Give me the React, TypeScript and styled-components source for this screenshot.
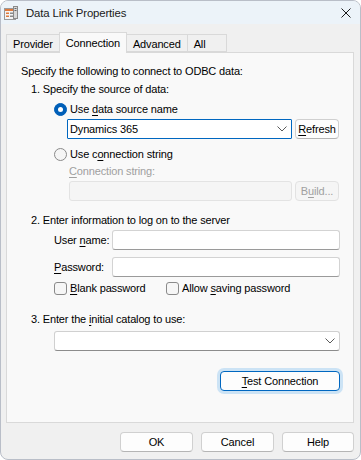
import React from "react";
import styled, { createGlobalStyle } from "styled-components";

const GlobalStyle = createGlobalStyle`
  html, body {
    margin: 0;
    padding: 0;
    background: #ffffff;
  }
  body {
    font-family: "Liberation Sans", Arial, sans-serif;
    font-size: 11px;
    line-height: 16px;
    letter-spacing: -0.15px;
    color: #000;
  }
  * {
    box-sizing: border-box;
  }
`;

const Window = styled.div`
  width: 361px;
  height: 460px;
  border: 1px solid #b9bec8;
  border-radius: 8px;
  background: #f0f0f0;
  overflow: hidden;
  display: flex;
  flex-direction: column;
`;

const TitleBar = styled.div`
  height: 23px;
  background: #ecf3f9;
  display: flex;
  align-items: center;
  padding-left: 2px;
  padding-right: 9px;
`;

const TitleText = styled.span`
  font-size: 11.4px;
  color: #1a1a1a;
  margin-left: 7px;
  flex: 1;
`;

const Body = styled.div`
  flex: 1;
  display: flex;
  flex-direction: column;
  padding: 8px 6px 0 5px;
`;

const TabStrip = styled.div`
  display: flex;
  align-items: flex-end;
  height: 20px;
  padding-left: 1px;
  position: relative;
  z-index: 1;
`;

const Tab = styled.div<{ $active?: boolean }>`
  height: ${(p) => (p.$active ? "21px" : "18px")};
  margin-bottom: ${(p) => (p.$active ? "-1px" : "0")};
  padding: 0 6px;
  min-width: 40px;
  background: ${(p) => (p.$active ? "#f9f9f9" : "#f0f0f0")};
  border: 1px solid #d9d9d9;
  border-bottom: ${(p) => (p.$active ? "none" : "1px solid #d9d9d9")};
  margin-left: -1px;
  display: flex;
  align-items: center;
  padding-top: ${(p) => (p.$active ? "0" : "1px")};
  white-space: nowrap;
`;

const Panel = styled.div`
  height: 371px;
  background: #f9f9f9;
  border: 1px solid #d9d9d9;
  padding: 10px 13px 0 14px;
  display: flex;
  flex-direction: column;
`;

const Line = styled.div<{ $indent?: number; $top?: number; $disabled?: boolean }>`
  height: 16px;
  line-height: 16px;
  margin-left: ${(p) => p.$indent ?? 0}px;
  margin-top: ${(p) => p.$top ?? 0}px;
  color: ${(p) => (p.$disabled ? "#a0a0a0" : "#000")};
  white-space: nowrap;
`;

const Row = styled.div<{ $indent?: number; $top?: number }>`
  display: flex;
  align-items: center;
  min-height: 16px;
  margin-left: ${(p) => p.$indent ?? 0}px;
  margin-top: ${(p) => p.$top ?? 0}px;
  white-space: nowrap;
`;

const Mn = styled.u`
  text-decoration: underline;
  text-underline-offset: 2px;
  text-decoration-thickness: 1px;
`;

const RadioDot = styled.span<{ $checked?: boolean }>`
  width: 13px;
  height: 13px;
  border-radius: 50%;
  flex: none;
  margin-right: 3px;
  display: flex;
  align-items: center;
  justify-content: center;
  background: ${(p) => (p.$checked ? "#005fb8" : "#f5f5f5")};
  border: 1px solid ${(p) => (p.$checked ? "#005fb8" : "#8a8a8a")};
  &::after {
    content: "";
    display: ${(p) => (p.$checked ? "block" : "none")};
    width: 5px;
    height: 5px;
    border-radius: 50%;
    background: #ffffff;
  }
`;

const CheckBox = styled.span`
  width: 13px;
  height: 13px;
  border-radius: 3px;
  flex: none;
  margin-right: 3px;
  background: #f6f6f6;
  border: 1px solid #8a8a8a;
`;

const Combo = styled.div<{ $width: number; $focused?: boolean }>`
  width: ${(p) => p.$width}px;
  height: 20px;
  background: #ffffff;
  border: 1px solid ${(p) => (p.$focused ? "#0067c0" : "#d0d0d0")};
  border-bottom-color: ${(p) => (p.$focused ? "#0067c0" : "#8c8c8c")};
  border-radius: ${(p) => (p.$focused ? "1px" : "3px")};
  display: flex;
  align-items: center;
  padding-left: 2px;
  padding-right: 4px;
`;

const ComboText = styled.span`
  flex: 1;
`;

const TextBox = styled.div<{ $width: number; $disabled?: boolean }>`
  width: ${(p) => p.$width}px;
  height: 20px;
  background: ${(p) => (p.$disabled ? "#f5f5f5" : "#ffffff")};
  border: 1px solid ${(p) => (p.$disabled ? "#e3e3e3" : "#d3d3d3")};
  border-bottom-color: ${(p) => (p.$disabled ? "#e3e3e3" : "#9a9a9a")};
  border-radius: 3px;
`;

const Button = styled.div<{ $width: number; $disabled?: boolean }>`
  width: ${(p) => p.$width}px;
  height: 20px;
  background: ${(p) => (p.$disabled ? "#f5f5f5" : "#fdfdfd")};
  color: ${(p) => (p.$disabled ? "#a0a0a0" : "#000")};
  border: 1px solid ${(p) => (p.$disabled ? "#e2e2e2" : "#d0d0d0")};
  border-bottom-color: ${(p) => (p.$disabled ? "#e2e2e2" : "#b5b5b5")};
  border-radius: 4px;
  display: flex;
  align-items: center;
  justify-content: center;
  white-space: nowrap;
  flex: none;
`;

const SideButton = styled(Button)`
  margin-left: 3px;
`;

const DefaultButton = styled(Button)`
  border: 1px solid #0067c0;
  box-shadow: 0 0 0 3px #cce3f5;
  margin-top: 20px;
  align-self: flex-end;
`;

const Label = styled.span<{ $width?: number }>`
  width: ${(p) => (p.$width ? `${p.$width}px` : "auto")};
  flex: none;
`;

const Footer = styled.div`
  display: flex;
  justify-content: flex-end;
  gap: 8px;
  padding-top: 9px;
`;

const Chevron = () => (
  <svg width="10" height="6" viewBox="0 0 10 6">
    <polyline points="0.5,0.5 5,5 9.5,0.5" fill="none" stroke="#5a5a5a" strokeWidth="1" />
  </svg>
);

const AppIcon = () => (
  <svg width="16" height="16" viewBox="0 0 16 16">
    <rect x="1.5" y="3.5" width="11" height="11" fill="#f4f4f4" stroke="#9a9a9a" />
    <rect x="2" y="4" width="10" height="2" fill="#e07a3c" />
    <rect x="3" y="7.5" width="3" height="1.5" fill="#e07a3c" />
    <rect x="3" y="10.5" width="3" height="1.5" fill="#e07a3c" />
    <rect x="7" y="7.5" width="4" height="1.5" fill="#8a8a8a" />
    <rect x="7" y="10.5" width="4" height="1.5" fill="#8a8a8a" />
    <rect x="10.5" y="1.5" width="4" height="12" fill="#d8d8d8" stroke="#8a8a8a" />
    <rect x="11.5" y="3" width="2" height="1" fill="#666" />
    <rect x="11.5" y="5" width="2" height="1" fill="#666" />
  </svg>
);

const CloseIcon = () => (
  <svg width="10" height="10" viewBox="0 0 10 10">
    <path d="M0.5 0.5 L9.5 9.5 M9.5 0.5 L0.5 9.5" stroke="#1a1a1a" strokeWidth="1" />
  </svg>
);

export default function App() {
  return (
    <>
      <GlobalStyle />
      <Window>
        <TitleBar>
          <AppIcon />
          <TitleText>Data Link Properties</TitleText>
          <CloseIcon />
        </TitleBar>
        <Body>
          <TabStrip>
            <Tab>Provider</Tab>
            <Tab $active>Connection</Tab>
            <Tab>Advanced</Tab>
            <Tab>All</Tab>
          </TabStrip>
          <Panel>
            <Line>Specify the following to connect to ODBC data:</Line>
            <Line $indent={10} $top={2}>1. Specify the source of data:</Line>
            <Row $indent={33} $top={4}>
              <RadioDot $checked />
              <span>
                Use <Mn>d</Mn>ata source name
              </span>
            </Row>
            <Row $indent={46} $top={2}>
              <Combo $width={225} $focused>
                <ComboText>Dynamics 365</ComboText>
                <Chevron />
              </Combo>
              <SideButton $width={44}>
                <span>
                  <Mn>R</Mn>efresh
                </span>
              </SideButton>
            </Row>
            <Row $indent={33} $top={7}>
              <RadioDot />
              <span>
                Use c<Mn>o</Mn>nnection string
              </span>
            </Row>
            <Line $indent={48} $top={1} $disabled>
              <Mn>C</Mn>onnection string:
            </Line>
            <Row $indent={48} $top={2}>
              <TextBox $width={223} $disabled />
              <SideButton $width={44} $disabled>
                <span>
                  B<Mn>u</Mn>ild...
                </span>
              </SideButton>
            </Row>
            <Line $indent={10} $top={11}>2. Enter information to log on to the server</Line>
            <Row $indent={33} $top={2}>
              <Label $width={58}>
                User <Mn>n</Mn>ame:
              </Label>
              <TextBox $width={229} />
            </Row>
            <Row $indent={33} $top={7}>
              <Label $width={58}>
                <Mn>P</Mn>assword:
              </Label>
              <TextBox $width={229} />
            </Row>
            <Row $indent={33} $top={3}>
              <CheckBox />
              <Label $width={96}>
                <Mn>B</Mn>lank password
              </Label>
              <CheckBox />
              <span>
                Allow <Mn>s</Mn>aving password
              </span>
            </Row>
            <Line $indent={10} $top={15}>
              3. Enter the <Mn>i</Mn>nitial catalog to use:
            </Line>
            <Row $indent={33} $top={4}>
              <Combo $width={287}>
                <ComboText />
                <Chevron />
              </Combo>
            </Row>
            <DefaultButton $width={120}>
              <span>
                <Mn>T</Mn>est Connection
              </span>
            </DefaultButton>
          </Panel>
          <Footer>
            <Button $width={73}>OK</Button>
            <Button $width={73}>Cancel</Button>
            <Button $width={72}>Help</Button>
          </Footer>
        </Body>
      </Window>
    </>
  );
}
